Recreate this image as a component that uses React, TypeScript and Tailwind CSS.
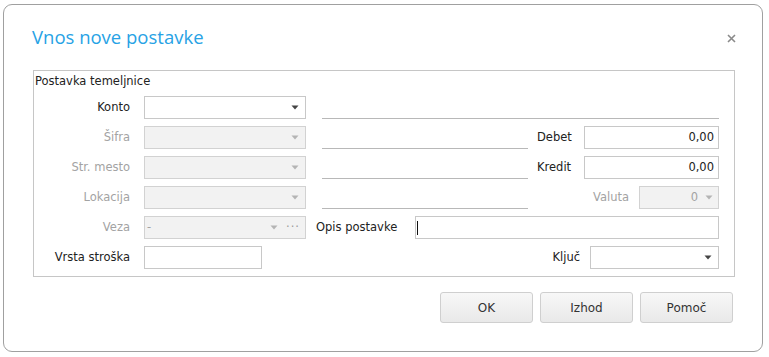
import React from "react";

const Arrow = ({ disabled }: { disabled?: boolean }) => (
  <svg width="8" height="5" viewBox="0 0 8 5" className="shrink-0">
    <path d="M0.5 0.5 H7.5 L4 4.5 Z" fill={disabled ? "#b4b4b4" : "#444"} />
  </svg>
);

const Label = ({ children, disabled }: { children: React.ReactNode; disabled?: boolean }) => (
  <div className={`w-[100px] shrink-0 pr-[4px] text-right ${disabled ? "text-[#a3a3a3]" : "text-[#222]"}`}>{children}</div>
);

const Select = ({ disabled, w }: { disabled?: boolean; w: string }) => (
  <div
    className={`${w} h-[23px] shrink-0 flex items-center justify-end pr-[6px] border ${
      disabled ? "bg-[#f2f2f2] border-[#d2d2d2]" : "bg-white border-[#c8c8c8]"
    }`}
  >
    <Arrow disabled={disabled} />
  </div>
);

const Underline = ({ w }: { w: string }) => <div className={`${w} self-end border-b border-[#b8b8b8] h-[1px]`} />;

export default function App() {
  return (
    <div className="w-[769px] h-[357px] bg-white pt-[4px] pl-[3px]" style={{ fontFamily: '"DejaVu Sans", sans-serif' }}>
      <div className="w-[760px] h-[348px] border border-[#a0a0a0] rounded-[9px] px-[29px] flex flex-col">
        <div className="h-[65px] flex items-center justify-between">
          <div className="text-[18.5px] text-[#27a2e5] -ml-[1px] -mt-[1px]" style={{ fontFamily: '"Open Sans", sans-serif' }}>
            Vnos nove postavke
          </div>
          <svg width="9" height="9" viewBox="0 0 9 9" className="mr-[-3px] mt-[1px]">
            <path d="M1 1 L8 8 M8 1 L1 8" stroke="#8a8a8a" strokeWidth="1.6" />
          </svg>
        </div>
        <div className="w-[702px] border border-[#c6c6c6] text-[11.5px] flex flex-col pb-[7px]">
          <div className="h-[19px] pl-[1px] pt-[3px] leading-[14px] text-[#222]">Postavka temeljnice</div>
          <div className="flex flex-col gap-[7px] pr-[15px] mt-[6px]">
            {/* row 1 */}
            <div className="flex items-center h-[23px]">
              <Label>Konto</Label>
              <div className="ml-[10px]"><Select w="w-[162px]" /></div>
              <div className="ml-[16px] flex-1 h-full flex"><Underline w="w-full" /></div>
            </div>
            {/* row 2 */}
            <div className="flex items-center h-[23px]">
              <Label disabled>Šifra</Label>
              <div className="ml-[10px]"><Select disabled w="w-[162px]" /></div>
              <div className="ml-[16px] h-full flex"><Underline w="w-[206px]" /></div>
              <div className="ml-[9px] w-[47px] text-[#222]">Debet</div>
              <div className="flex-1 h-[23px] border border-[#c8c8c8] flex items-center justify-end pr-[4px] text-[#222]">0,00</div>
            </div>
            {/* row 3 */}
            <div className="flex items-center h-[23px]">
              <Label disabled>Str. mesto</Label>
              <div className="ml-[10px]"><Select disabled w="w-[162px]" /></div>
              <div className="ml-[16px] h-full flex"><Underline w="w-[206px]" /></div>
              <div className="ml-[9px] w-[47px] text-[#222]">Kredit</div>
              <div className="flex-1 h-[23px] border border-[#c8c8c8] flex items-center justify-end pr-[4px] text-[#222]">0,00</div>
            </div>
            {/* row 4 */}
            <div className="flex items-center h-[23px]">
              <Label disabled>Lokacija</Label>
              <div className="ml-[10px]"><Select disabled w="w-[162px]" /></div>
              <div className="ml-[16px] h-full flex"><Underline w="w-[206px]" /></div>
              <div className="flex-1 text-right pr-[10px] text-[#a3a3a3]">Valuta</div>
              <div className="w-[80px] h-[23px] bg-[#f2f2f2] border border-[#d2d2d2] flex items-center justify-end pr-[5px] gap-[7px] text-[#a3a3a3]">
                <span>0</span>
                <Arrow disabled />
              </div>
            </div>
            {/* row 5 */}
            <div className="flex items-center h-[23px]">
              <Label disabled>Veza</Label>
              <div className="ml-[10px] w-[162px] h-[23px] bg-[#f2f2f2] border border-[#d2d2d2] flex items-center pl-[2px] pr-[5px] text-[#a3a3a3]">
                <span>-</span>
                <div className="flex-1" />
                <Arrow disabled />
                <span className="ml-[8px] tracking-[1px] text-[#9a9a9a]">···</span>
              </div>
              <div className="ml-[10px] w-[99px] text-[#222]">Opis postavke</div>
              <div className="flex-1 h-[23px] border border-[#c8c8c8] flex items-center pl-[1px]">
                <div className="w-[1px] h-[14px] bg-[#111]" />
              </div>
            </div>
            {/* row 6 */}
            <div className="flex items-center h-[23px]">
              <Label>Vrsta stroška</Label>
              <div className="ml-[10px] w-[118px] h-[23px] border border-[#c8c8c8] bg-white" />
              <div className="flex-1 text-right pr-[10px] text-[#222]">Ključ</div>
              <Select w="w-[129px]" />
            </div>
          </div>
        </div>
        <div className="flex justify-end gap-[7px] mt-[15px] text-[12px] text-[#333]">
          {["OK", "Izhod", "Pomoč"].map((t) => (
            <div
              key={t}
              className="w-[93px] h-[31px] rounded-[3px] border border-[#cfcfcf] bg-gradient-to-b from-[#f7f7f7] to-[#e9e9e9] flex items-center justify-center"
            >
              {t}
            </div>
          ))}
        </div>
      </div>
    </div>
  );
}
